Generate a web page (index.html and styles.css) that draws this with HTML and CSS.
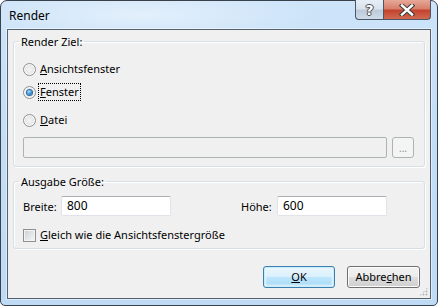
FILE: index.html
```html
<!DOCTYPE html>
<html lang="de">
<head>
  <meta charset="UTF-8" />
  <title>Render</title>
  <link rel="stylesheet" href="styles.css">
</head>
<body>

<div class="window">
  <div class="titlebar">
    <span class="title">Render</span>
    <div class="caption">
      <span class="cap-btn help">?</span>
      <span class="cap-btn close">
        <svg width="16" height="12" viewBox="0 0 16 12">
          <path d="M3 1.5 L13 10.5 M13 1.5 L3 10.5" stroke="#3b3b3b" stroke-width="4.4" stroke-linecap="square" fill="none"/>
          <path d="M3 1.5 L13 10.5 M13 1.5 L3 10.5" stroke="#fff" stroke-width="2.4" stroke-linecap="square" fill="none"/>
        </svg>
      </span>
    </div>
  </div>

  <div class="client">
    <fieldset class="group target">
      <legend>Render Ziel:</legend>
      <label class="option"><span class="radio"></span><span class="text"><u>A</u>nsichtsfenster</span></label>
      <label class="option second"><span class="radio on"></span><span class="text focus"><u>F</u>enster</span></label>
      <label class="option third"><span class="radio"></span><span class="text"><u>D</u>atei</span></label>
      <div class="file-row">
        <span class="textbox disabled"></span>
        <span class="browse">...</span>
      </div>
    </fieldset>

    <fieldset class="group size">
      <legend>Ausgabe Größe:</legend>
      <div class="size-row">
        <span class="lbl">Breite:</span>
        <span class="textbox">800</span>
        <span class="lbl hoehe">Höhe:</span>
        <span class="textbox">600</span>
      </div>
      <label class="option same"><span class="checkbox"></span><span class="text"><u>G</u>leich wie die Ansichtsfenstergröße</span></label>
    </fieldset>

    <div class="actions">
      <span class="btn default"><u>O</u>K</span>
      <span class="btn">Abbre<u>c</u>hen</span>
    </div>
    <span class="grip"></span>
  </div>
</div>

</body>
</html>
```

FILE: styles.css
```css
body {
  margin: 0;
  font-family: "Noto Sans", "Open Sans", sans-serif;
  font-size: 11px;
  color: #000;
  background: #fff;
}
.window {
  width: 438px;
  height: 306px;
  box-sizing: border-box;
  display: flex;
  flex-direction: column;
  border: 1px solid #39414b;
  border-radius: 7px 7px 5px 5px;
  padding: 0 6px 6px 6px;
  background:
    radial-gradient(ellipse 260px 40px at 140px 14px, rgba(255,255,255,0.45), rgba(255,255,255,0) 70%),
    linear-gradient(180deg, #cde4f9 0%, #c4def7 40%, #bfdaf5 100%);
}
.titlebar {
  height: 28px;
  display: flex;
  justify-content: space-between;
  align-items: flex-start;
}
.title {
  padding: 7px 0 0 2px;
  font-size: 12px;
  line-height: 15px;
}
.caption {
  display: flex;
  margin-top: -1px;
}
.cap-btn {
  height: 20px;
  box-sizing: border-box;
  border: 1px solid #4b5563;
  border-top: none;
  display: flex;
  align-items: center;
  justify-content: center;
}
.help {
  width: 28px;
  border-right: none;
  border-radius: 0 0 0 4px;
  background: linear-gradient(180deg, #e6edf5 0%, #d9e3ee 45%, #bccadb 55%, #cfdbe8 100%);
  color: #fff;
  font-family: "DejaVu Sans", sans-serif;
  font-size: 14px;
  font-weight: bold;
  text-shadow: 0 0 1px #333, 1px 0 0 #555, -1px 0 0 #555, 0 1px 0 #555, 0 -1px 0 #555;
}
.close {
  width: 48px;
  border-radius: 0 0 4px 0;
  background: linear-gradient(180deg, #e7a898 0%, #d7806c 45%, #c4432e 55%, #d06a52 100%);
}
.client {
  flex: 1;
  position: relative;
  border: 1px solid #56616e;
  background: #f0f0f0;
  box-shadow: 0 0 0 1px rgba(255,255,255,0.45);
  display: flex;
  flex-direction: column;
}
.group {
  margin: 4px 5px 0 5px;
  border: 1px solid #d5dfe5;
  border-radius: 3px;
  box-shadow: inset 1px 1px 0 #fff, 1px 1px 0 #fff;
  padding: 12px 9px 8px 9px;
  min-width: 0;
}
.group legend {
  padding: 0 2px;
  margin-left: -4px;
  line-height: 15px;
}
.group.size {
  margin-top: 7px;
  padding-top: 7px;
  padding-bottom: 5px;
}
.option {
  display: flex;
  align-items: center;
  height: 16px;
  line-height: 16px;
}
.option.second {
  margin-top: 7px;
}
.option.third {
  margin-top: 12px;
}
.option.same {
  margin-top: 11px;
}
.text {
  margin-left: 3px;
  padding: 0 1px;
}
.text.focus {
  outline: 1px dotted #000;
  outline-offset: 0;
}
.radio {
  width: 13px;
  height: 13px;
  box-sizing: border-box;
  border-radius: 50%;
  border: 1px solid #8e9192;
  background: radial-gradient(circle at 50% 50%, #f4f4f4 0%, #e4e5e6 60%, #d3d5d6 100%);
  box-shadow: inset 0 0 0 1px #fcfcfc;
  position: relative;
}
.radio.on::after {
  content: "";
  position: absolute;
  left: 3px;
  top: 3px;
  width: 5px;
  height: 5px;
  border-radius: 50%;
  background: radial-gradient(circle at 40% 35%, #b9e4ff 0%, #3f9be0 45%, #0b4f94 100%);
  box-shadow: 0 0 0 1px #2a6aa3;
}
.checkbox {
  width: 13px;
  height: 13px;
  box-sizing: border-box;
  border: 1px solid #8e8f8f;
  background: linear-gradient(135deg, #cbcfd5 0%, #e6e7e9 60%, #f6f6f6 100%);
  box-shadow: inset 0 0 0 1px #f4f4f4;
}
.file-row {
  display: flex;
  gap: 5px;
  margin-top: 9px;
}
.textbox {
  width: 110px;
  height: 20px;
  box-sizing: border-box;
  border: 1px solid #e2e3ea;
  border-top-color: #abadb3;
  border-radius: 2px;
  background: #fff;
  padding: 0 5px;
  line-height: 18px;
  font-size: 12px;
}
.textbox.disabled {
  width: 364px;
  height: 21px;
  background: #f0f0f0;
  border: 1px solid #adb2b5;
}
.browse {
  width: 22px;
  height: 21px;
  box-sizing: border-box;
  border: 1px solid #adb2b5;
  border-radius: 3px;
  background: #f4f4f4;
  color: #8d8d8d;
  text-align: center;
  line-height: 20px;
  font-size: 10px;
}
.size-row {
  display: flex;
  align-items: center;
}
.lbl {
  width: 38px;
}
.lbl.hoehe {
  width: 36px;
  margin-left: 70px;
}
.actions {
  display: flex;
  justify-content: flex-end;
  gap: 12px;
  margin-top: 17px;
  padding-right: 10px;
}
.btn {
  width: 73px;
  height: 22px;
  box-sizing: border-box;
  border: 1px solid #707070;
  border-radius: 3px;
  background: linear-gradient(180deg, #f2f2f2 0%, #ebebeb 50%, #dddddd 51%, #cfcfcf 100%);
  box-shadow: inset 0 0 0 1px #fcfcfc;
  text-align: center;
  line-height: 20px;
}
.btn.default {
  width: 72px;
  border-color: #3c7fb1;
  background: linear-gradient(180deg, #eaf6fd 0%, #d9f0fc 50%, #bee6fd 51%, #a7d9f5 100%);
  box-shadow: inset 0 0 0 1px #c8ecfb, inset 0 0 2px 2px #e8f6fd;
}
.grip {
  position: absolute;
  right: 2px;
  bottom: 2px;
  width: 9px;
  height: 9px;
  background:
    radial-gradient(circle, #b5b8bb 0.8px, transparent 1.2px) 0 0 / 3px 3px;
  clip-path: polygon(100% 0, 100% 100%, 0 100%);
}
```
